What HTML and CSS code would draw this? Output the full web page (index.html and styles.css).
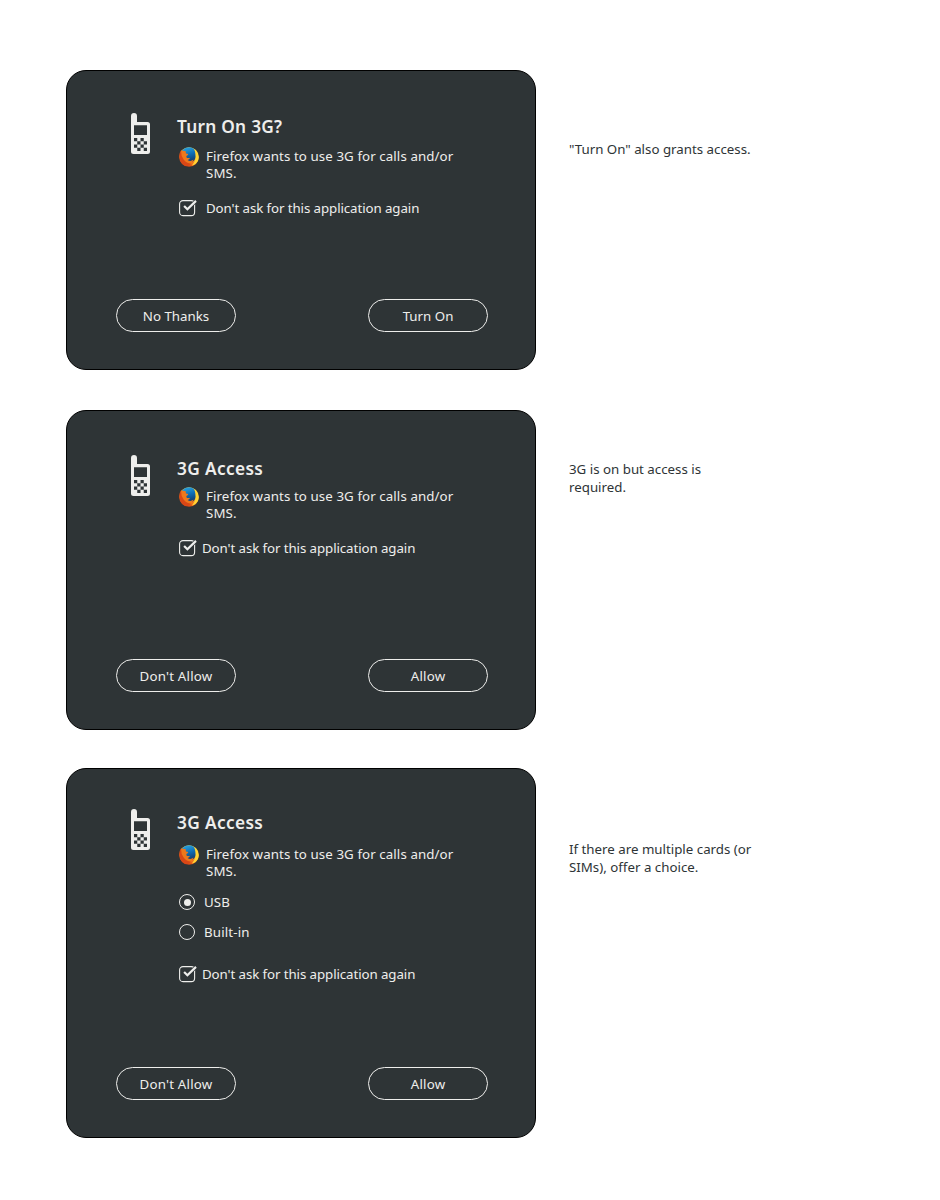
FILE: index.html
```html
<!DOCTYPE html>
<html lang="en">
<head>
<meta charset="utf-8">
<title>3G access dialogs</title>
<link rel="stylesheet" href="styles.css">
</head>
<body>
<svg class="defs" width="0" height="0" aria-hidden="true">
  <defs>
    <linearGradient id="fox" x1="0.8" y1="0" x2="0.25" y2="1">
      <stop offset="0" stop-color="#ffe84a"/><stop offset="0.4" stop-color="#fdb528"/><stop offset="0.7" stop-color="#ee6a1b"/><stop offset="1" stop-color="#c93413"/>
    </linearGradient>
    <linearGradient id="globe" x1="0.3" y1="0" x2="0.6" y2="1">
      <stop offset="0" stop-color="#2aa5e0"/><stop offset="0.5" stop-color="#0e6db5"/><stop offset="1" stop-color="#123a6b"/>
    </linearGradient>
    <symbol id="phone" viewBox="0 0 20 42">
      <path fill="#eeeeec" fill-rule="evenodd" d="M0 3Q0 0 3 0Q6 0 6 3V9H16.500Q19 9 19 11.500V38.500Q19 41 16.500 41H2.500Q0 41 0 38.500ZM3 12.300V22H16V12.300Z"/>
      <path fill="#2e3436" d="M3 25h3.250v3.250H3zM9.500 25h3.250v3.250H9.500zM6.250 28.250h3.250v3.250H6.250zM12.750 28.250H16v3.250h-3.250zM3 31.500h3.250v3.250H3zM9.500 31.500h3.250v3.250H9.500zM6.250 34.750h3.250V38H6.250zM12.750 34.750H16V38h-3.250z"/>
    </symbol>
    <symbol id="firefox" viewBox="0 0 20 20">
      <circle cx="10" cy="10" r="9.800" fill="url(#fox)"/>
      <path fill="url(#globe)" d="M3 3.500Q6 .3 10.500 .2Q15.500 .8 16.600 5Q18 10 15 13.500Q11.500 16.500 7.500 13.500L3.500 8Z"/>
      <path fill="#ee781c" d="M1.800 4Q2.500 2.500 3.500 3.700Q5.500 3.500 7 4.600Q6.500 5.700 7 6.400L9.300 6.900Q9.300 8 7.400 9Q7 10.500 8.200 10.900Q9.600 11.200 11 10.800Q10.600 12.500 8.600 13Q11.500 15.100 14.500 12.600L12.500 17L5 17L1 11.500Z"/>
      <path fill="#ffd534" d="M15.300 2.200Q21.500 8 18.800 14Q16.500 18 12.800 18.600Q17 14 16.600 9.500Q16.500 5.500 15.300 2.200Z"/>
      <path fill="#d94716" d="M.3 9Q.4 5 2 3.800Q2 9 4.600 12.500Q7.500 16.300 12 16.600Q9.500 20 5.300 18.400Q.8 16 .3 9Z"/>
    </symbol>
    <symbol id="check" viewBox="0 0 19 17">
      <rect x="0.600" y="0.600" width="15" height="15" rx="3.400" fill="none" stroke="#eeeeec" stroke-width="1.100"/>
      <path d="M4.800 6.200L8.300 9.500L16.700 1.200" fill="none" stroke="#2e3436" stroke-width="3.400"/>
      <path d="M5.100 6L8.400 9.200L17 .9" fill="none" stroke="#eeeeec" stroke-width="2.200"/>
    </symbol>
  </defs>
</svg>
<main class="board">
  <section class="row row-turn-on">
    <article class="card">
      <div class="content">
        <svg class="phone"><use href="#phone"/></svg>
        <div class="details">
          <h2 class="title title-turn-on">Turn On 3G?</h2>
          <div class="message"><svg class="firefox"><use href="#firefox"/></svg><p class="copy">Firefox wants to use 3G for calls and/or<br>SMS.</p></div>
          <div class="option"><svg class="check"><use href="#check"/></svg><span class="label">Don't ask for this application again</span></div>
        </div>
      </div>
      <div class="actions"><div class="button">No Thanks</div><div class="button">Turn On</div></div>
    </article>
    <p class="note">"Turn On" also grants access.</p>
  </section>
  <section class="row row-access">
    <article class="card">
      <div class="content">
        <svg class="phone"><use href="#phone"/></svg>
        <div class="details">
          <h2 class="title">3G Access</h2>
          <div class="message"><svg class="firefox"><use href="#firefox"/></svg><p class="copy">Firefox wants to use 3G for calls and/or<br>SMS.</p></div>
          <div class="option"><svg class="check"><use href="#check"/></svg><span class="label">Don't ask for this application again</span></div>
        </div>
      </div>
      <div class="actions"><div class="button button-allow">Don't Allow</div><div class="button button-allow">Allow</div></div>
    </article>
    <p class="note">3G is on but access is<br>required.</p>
  </section>
  <section class="row row-choice">
    <article class="card">
      <div class="content">
        <svg class="phone"><use href="#phone"/></svg>
        <div class="details">
          <h2 class="title">3G Access</h2>
          <div class="message"><svg class="firefox"><use href="#firefox"/></svg><p class="copy">Firefox wants to use 3G for calls and/or<br>SMS.</p></div>
          <div class="radios">
            <div class="radio"><i class="dot dot-on"></i><span class="label-radio">USB</span></div>
            <div class="radio"><i class="dot"></i><span class="label-radio">Built-in</span></div>
          </div>
          <div class="option"><svg class="check"><use href="#check"/></svg><span class="label">Don't ask for this application again</span></div>
        </div>
      </div>
      <div class="actions"><div class="button button-allow">Don't Allow</div><div class="button button-allow">Allow</div></div>
    </article>
    <p class="note">If there are multiple cards (or<br>SIMs), offer a choice.</p>
  </section>
</main>
</body>
</html>
```
FILE: styles.css
```css
* { box-sizing: border-box; }
body {
  margin: 0;
  background: #fff;
  color: #2e3436;
  font: 13.3px/18px "Noto Sans", "Open Sans", sans-serif;
  white-space: nowrap;
}
p, h2 { margin: 0; }
svg { display: block; flex: none; }
.defs { position: absolute; }
.board { padding: 70px 66px 0; height: 1200px; }
.row { display: flex; gap: 33px; }
.row-access { margin-top: 40px; }
.row-choice { margin-top: 38px; }
.card {
  flex: none;
  display: flex;
  flex-direction: column;
  justify-content: space-between;
  width: 470px;
  height: 300px;
  padding: 42px 47px 37px 49px;
  border: 1px solid #000;
  border-radius: 20px;
  background: #2e3436;
  color: #eeeeec;
}
.row-access .card { height: 320px; padding-top: 44px; }
.row-choice .card { height: 370px; padding-top: 40px; }
.content { display: flex; gap: 26px; padding-left: 15px; }
.phone { width: 20px; height: 42px; }
.title { margin-top: 2px; font-size: 17.3px; line-height: 24px; font-weight: 600; letter-spacing: 0.35px; }
.title-turn-on { letter-spacing: 0.25px; }
.message { display: flex; gap: 7px; height: 35px; margin-top: 8px; padding-left: 2px; }
.row-access .message { margin-top: 6px; }
.row-choice .message { margin-top: 10px; }
.copy { padding-top: 1px; line-height: 17px; letter-spacing: 0.09px; }
.firefox { width: 20px; height: 20px; }
.option { display: flex; gap: 8px; height: 18px; margin-top: 18px; padding-left: 2px; }
.row-access .option, .row-choice .option { gap: 4px; }
.check { width: 19px; height: 17px; }
.label { line-height: 16px; letter-spacing: -0.09px; }
.radios { display: grid; gap: 12px; margin-top: 13px; padding-left: 2px; }
.row-choice .option { margin-top: 25px; }
.radio { display: flex; align-items: center; gap: 9px; height: 18px; }
.label-radio { line-height: 17px; letter-spacing: 0.15px; }
.dot { display: grid; place-items: center; width: 16px; height: 16px; border: 1px solid #eeeeec; border-radius: 50%; }
.dot-on::after { content: ""; width: 7px; height: 7px; border-radius: 50%; background: #eeeeec; }
.actions { display: flex; justify-content: space-between; }
.button { width: 120px; height: 33px; border: 1px solid #eeeeec; border-radius: 17px; text-align: center; line-height: 32px; }
.button-allow { letter-spacing: 0.2px; }
.note { margin-top: 70px; }
.row-access .note { margin-top: 50px; }
.row-choice .note { margin-top: 72px; }
```
